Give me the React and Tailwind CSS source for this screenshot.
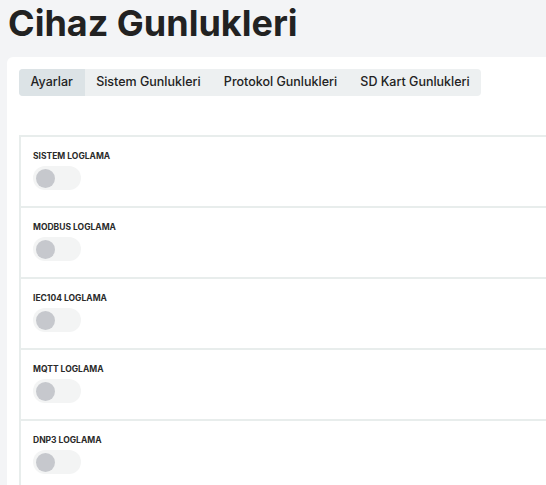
import React, { useState } from 'react';

// Log sections shown on the settings tab
const LOG_SECTIONS = ['SISTEM LOGLAMA', 'MODBUS LOGLAMA', 'IEC104 LOGLAMA', 'MQTT LOGLAMA', 'DNP3 LOGLAMA'];

const TABS = ['Ayarlar', 'Sistem Gunlukleri', 'Protokol Gunlukleri', 'SD Kart Gunlukleri'];

const Toggle = ({ on, onChange }) => (
  <button
    onClick={onChange}
    className={`flex h-[24px] w-[48px] items-center rounded-full px-[3px] ${on ? 'bg-[#2563eb] justify-end' : 'bg-[#f3f4f4] justify-start'}`}
  >
    <span className={`block h-[19px] w-[19px] rounded-full ${on ? 'bg-white' : 'bg-[#c6c8cd]'}`} />
  </button>
);

const LogCard = ({ label, on, onToggle }) => (
  <div className="border-t-2 border-l-2 border-[#e8edec] bg-white pl-[12px] pt-[13px] pb-[16px]">
    <div className="text-[8.5px] leading-[12px] font-bold text-[#2a2a2a]">{label}</div>
    <div className="mt-[4px]">
      <Toggle on={on} onChange={onToggle} />
    </div>
  </div>
);

const App = () => {
  const [activeTab, setActiveTab] = useState(0);
  const [flags, setFlags] = useState(LOG_SECTIONS.map(() => false));

  const toggle = (i) => setFlags(flags.map((f, j) => (j === i ? !f : f)));

  return (
    <div className="h-screen overflow-hidden bg-[#f3f4f6] font-['Inter',sans-serif]">
      <h1 className="pl-[8px] pt-[3px] text-[36px] leading-[40px] font-bold text-[#222222]">Cihaz Gunlukleri</h1>
      <div className="mt-[14px] ml-[7px] w-[580px] rounded-md bg-white pl-[12px] pt-[12px] pb-[40px]">
        <div className="flex w-fit overflow-hidden rounded-[4px] bg-[#edf0f1]">
          {TABS.map((t, i) => (
            <button
              key={t}
              onClick={() => setActiveTab(i)}
              className={`h-[27px] px-[11.6px] text-[12.5px] font-medium text-[#222222] ${activeTab === i ? 'bg-[#dce3e6]' : ''}`}
            >
              {t}
            </button>
          ))}
        </div>
        <div className="mt-[39px] flex flex-col">
          {LOG_SECTIONS.map((label, i) => (
            <LogCard key={label} label={label} on={flags[i]} onToggle={() => toggle(i)} />
          ))}
        </div>
      </div>
    </div>
  );
};

export default App;
